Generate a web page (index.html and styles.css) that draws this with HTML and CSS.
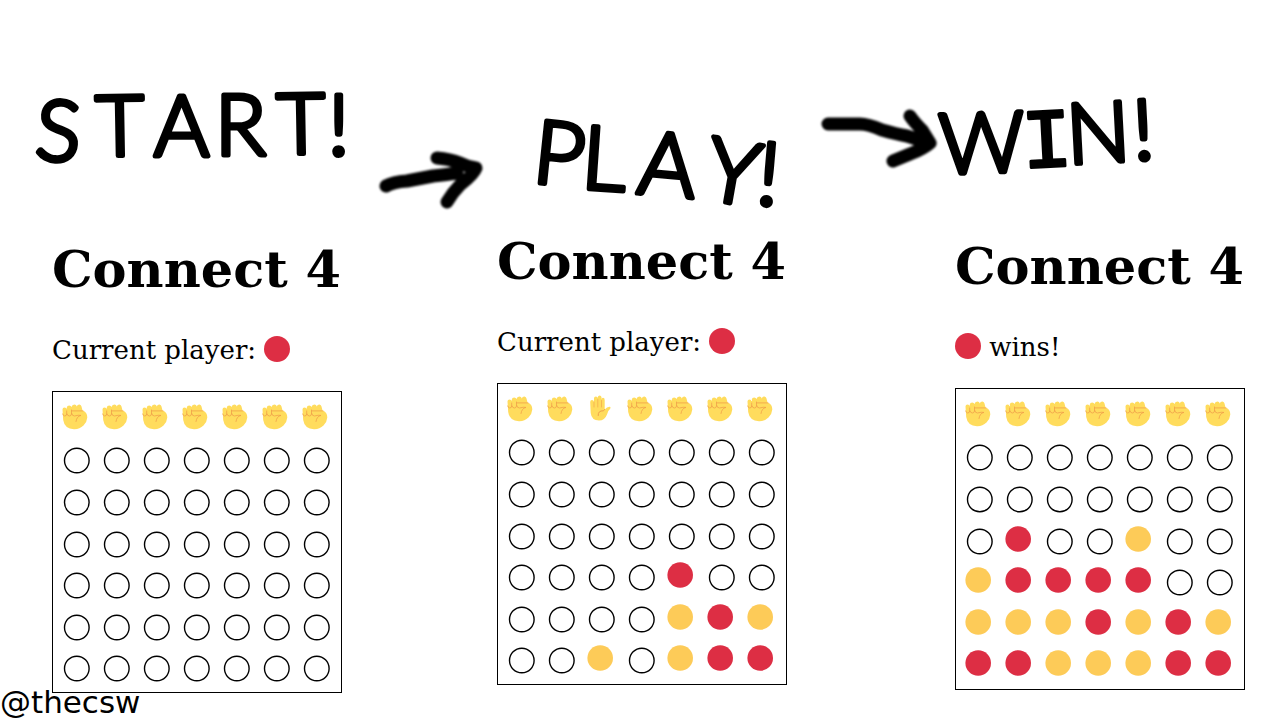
FILE: index.html
```html
<!DOCTYPE html>
<html lang="en">
<head>
<meta charset="utf-8">
<title>Connect 4</title>
<link rel="stylesheet" href="styles.css">
</head>
<body>
<svg class="sprites" aria-hidden="true">
  <symbol id="empty" viewBox="0 0 40 40"><circle cx="19.800" cy="19.500" r="12.300" fill="none" stroke="#000" stroke-width="1.4"/></symbol>
  <symbol id="red" viewBox="0 0 40 40"><circle cx="18.200" cy="17" r="12.800" fill="#dd2e44"/></symbol>
  <symbol id="yellow" viewBox="0 0 40 40"><circle cx="18.200" cy="17" r="12.800" fill="#fdcb58"/></symbol>
  <symbol id="fist" viewBox="0 0 40 40">
    <g transform="translate(5.500 7)">
      <path fill="#ffdc5d" d="M0 5.500Q0 3.500 2 3.500Q4 3.500 4.300 5V3.400Q4.500 1.500 6.700 1.500Q8.500 1.500 9 3Q9.500 .5 11.800 .5Q13.900 .5 14.300 2.500Q14.800 .3 17 .4Q18.700 .6 19 2.500L20 6.500Q24.800 8 24.800 13.500Q24.500 18 21 21.500Q17 25.400 11.500 25.200Q2 24.800 .7 16Z"/>
      <path fill="none" stroke="#f0a04a" stroke-width=".8" stroke-linecap="round" d="M.2 10Q.8 12 2.200 12Q4 12 4.200 10V7M4.500 10Q5 12 6.900 12Q8.700 12 9 10V6M9.300 6.900H20.500M9.200 9.500Q9.500 12 12 12Q16 10.800 18.500 11.400Q14.200 12.200 13.500 17.500"/>
    </g>
  </symbol>
  <symbol id="palm" viewBox="0 0 40 40">
    <g transform="translate(8 6)">
      <path fill="#ffdc5d" d="M.2 7Q.2 5 2 5Q3.800 5 4 7V3.300Q4 1.500 5.800 1.500Q7.700 1.500 7.800 3.300V2.200Q8 .4 9.700 .4Q11.300 .4 11.500 2.200V4.500Q11.500 2.800 13 2.800Q14.700 2.800 14.700 5V14.500Q17 11.600 20 11.800Q21 12.400 20.200 13.800Q18 15.500 17 19.500Q14.800 25.500 9 25.600Q1.500 25.300 .7 18Z"/>
      <path fill="none" stroke="#f0a04a" stroke-width=".6" stroke-linecap="round" d="M4 7V12M7.800 4.500V12M11.500 5.500V12"/>
      <path fill="none" stroke="#f0a04a" stroke-width="1" stroke-linecap="round" d="M14.500 14.500L13.500 15.800Q7.800 15.500 8.200 20.500"/>
    </g>
  </symbol>
  <symbol id="disc" viewBox="0 0 26 26"><circle cx="13" cy="13" r="13" fill="#dd2e44"/></symbol>
</svg>

<header class="banner">
  <svg class="lettering" viewBox="0 0 1280 232">
    <defs>
      <filter id="soft" x="-5%" y="-10%" width="110%" height="120%"><feGaussianBlur stdDeviation="1"/></filter>
    </defs>
    <text class="hand hand-start" x="34 96 154 215 277 328" y="159 156 156 155 154 155" rotate="4 -1 0 0 -1 0">START!</text>
    <text class="hand hand-play" x="531 580 636 702 755" y="182 188 193 198 204" rotate="6 4 5 10 5">PLAY!</text>
    <text class="hand hand-win" x="940 1023 1068 1134" y="174 168 164 160" rotate="-2 -3 -3 -3">W<tspan class="slab">I</tspan>N!</text>
    <g class="arrow" filter="url(#soft)">
      <path d="M386 186Q393 182 407 181L433 176Q444 175 457 173M437 158Q450 159 460 163Q468 167 476 168Q474 174 460 185Q453 192 447 202"/>
      <path d="M828 124H860Q868 124 882 130Q896 134 907 136L929 143M910 116Q914 122 922 130L930 143Q923 149 910 154L893 161"/>
    </g>
  </svg>
</header>

<main class="games">
  <section class="game game-start">
    <h1>Connect 4</h1>
    <p class="status">Current player: <svg class="disc" role="img" aria-label="red"><use href="#disc"/></svg></p>
    <table class="board" data-hands="fffffff" data-rows="....... ....... ....... ....... ....... ......."></table>
  </section>
  <section class="game game-play">
    <h1>Connect 4</h1>
    <p class="status">Current player: <svg class="disc" role="img" aria-label="red"><use href="#disc"/></svg></p>
    <table class="board" data-hands="ffpffff" data-rows="....... ....... ....... ....r.. ....yry ..y.yrr"></table>
  </section>
  <section class="game game-win">
    <h1>Connect 4</h1>
    <p class="status"><svg class="disc" role="img" aria-label="red"><use href="#disc"/></svg> wins!</p>
    <table class="board" data-hands="fffffff" data-rows="....... ....... .r..y.. yrrrr.. yyyryry rryyyrr"></table>
  </section>
</main>

<footer class="credit">@thecsw</footer>
<script src="board.js"></script>
</body>
</html>
```

FILE: styles.css
```css
body {
  margin: 0;
  position: relative;
  min-height: 100vh;
  background: #fff;
  color: #000;
  font-family: "DejaVu Serif", serif;
}

.sprites {
  position: absolute;
  width: 0;
  height: 0;
}

.lettering {
  display: block;
  width: 100%;
}

.hand {
  font-family: Lato, sans-serif;
  font-weight: 300;
  stroke: #000;
  stroke-width: 5px;
  stroke-linejoin: round;
}

.hand-start {
  font-size: 84px;
}

.hand-play {
  font-size: 88px;
}

.hand-win {
  font-size: 84px;
}

.slab {
  font-family: "Liberation Mono", monospace;
  stroke-width: 3px;
}

.arrow {
  fill: none;
  stroke: #000;
  stroke-width: 13px;
  stroke-linecap: round;
  stroke-linejoin: round;
}

.games {
  display: grid;
  grid-template-columns: 445fr 458fr 290px;
  padding: 0 35px 0 52px;
}

.game {
  width: 290px;
}

.game-start {
  margin-top: 8px;
}

.game-win {
  margin-top: 5px;
}

h1 {
  margin: 0 0 36px;
  font-size: 51px;
  line-height: 58px;
  white-space: nowrap;
}

.status {
  margin: 0 0 25px;
  font-size: 26px;
  line-height: 32px;
  white-space: nowrap;
}

.disc {
  width: 26px;
  height: 26px;
  vertical-align: -3px;
}

.board {
  box-sizing: border-box;
  width: 290px;
  height: 302px;
  padding: 4px 4px 2px;
  border: 1px solid #000;
  border-collapse: separate;
  border-spacing: 0;
}

.board td {
  padding: 0;
  text-align: center;
}

.board svg {
  display: block;
  width: 40px;
  height: 40px;
}

.board .drop {
  display: block;
  padding: 0 0 3px;
  border: 0;
  background: none;
  cursor: pointer;
}

.credit {
  position: absolute;
  left: 0;
  bottom: 0;
  font-family: "DejaVu Sans", sans-serif;
  font-size: 31px;
  line-height: 36px;
}
```

FILE: board.js
```js
const pieces = { ".": "empty", r: "red", y: "yellow", f: "fist", p: "palm" };
const icon = (key) => `<svg aria-hidden="true"><use href="#${pieces[key]}"/></svg>`;

document.querySelectorAll(".board").forEach((board) => {
  const hands = [...board.dataset.hands]
    .map((key, i) => `<td><button class="drop" type="button" aria-label="Drop in column ${i + 1}">${icon(key)}</button></td>`)
    .join("");
  const rows = board.dataset.rows
    .split(" ")
    .map((row) => `<tr>${[...row].map((key) => `<td>${icon(key)}</td>`).join("")}</tr>`)
    .join("");
  board.innerHTML = `<tbody><tr>${hands}</tr>${rows}</tbody>`;
});
```
